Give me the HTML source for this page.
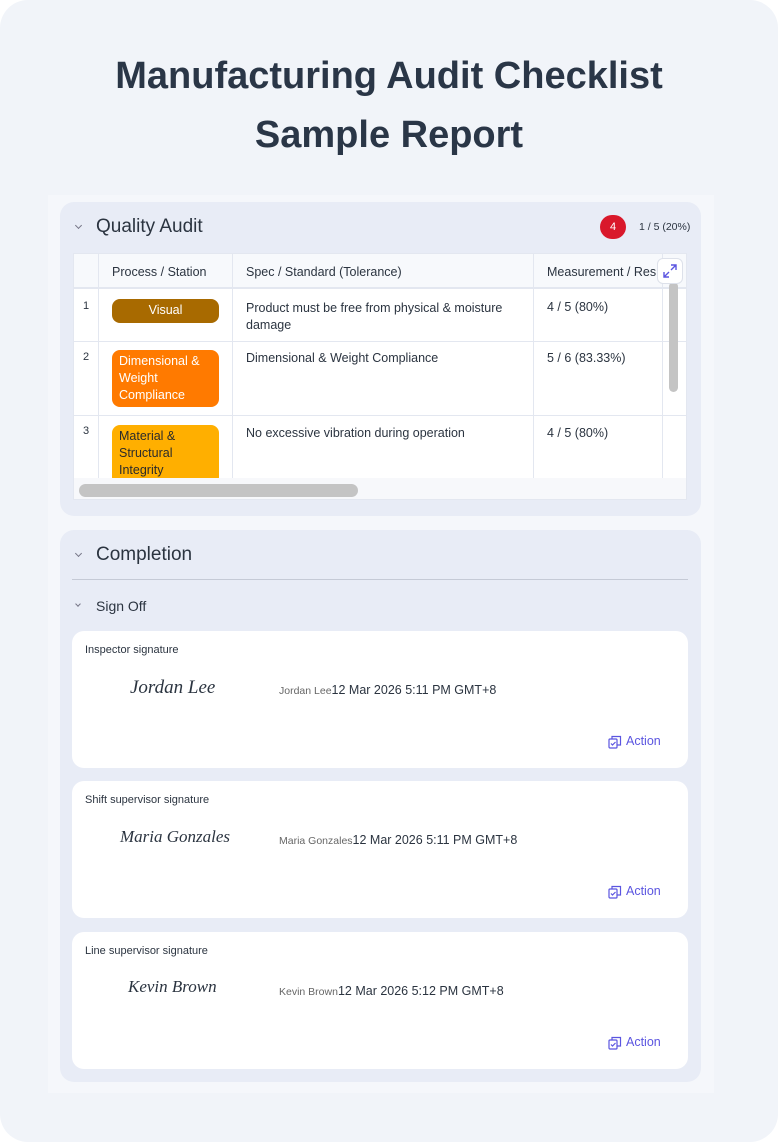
<!DOCTYPE html>
<html><head><style>
*{margin:0;padding:0;box-sizing:border-box}
body{width:778px;height:1142px;background:#fff;font-family:"Liberation Sans",sans-serif;color:#2b3440;position:relative;overflow:hidden}
.card{position:absolute;left:0;top:0;width:778px;height:1142px;background:#f1f4f9;border-radius:28px}
h1{position:absolute;left:0;width:778px;text-align:center;top:47px;font-size:38px;line-height:59px;font-weight:bold;color:#2a3647}
.inner{position:absolute;left:48px;top:195px;width:666px;height:898px;background:#f5f7fb}
.sec{position:absolute;left:60px;width:641px;background:#e8ecf6;border-radius:14px}
.chev{position:absolute;width:5px;height:5px;border-right:1.2px solid #778;border-bottom:1.2px solid #778;transform:rotate(45deg)}
.t{position:absolute;white-space:nowrap}
.tbl{position:absolute;left:73px;top:253px;width:614px;height:247px;background:#fff;border:1px solid #e3e7f0;overflow:hidden}
.hl{position:absolute;background:#e3e7f0}
.pill{position:absolute;left:38px;width:107px;border-radius:8px;font-size:12.5px;line-height:17px;padding:3px 7px}
.sig{position:absolute;left:72px;width:616px;height:137px;background:#fff;border-radius:12px}
.act{position:absolute;left:538px;top:103px;font-size:12.5px;color:#5b55e0}
.act svg{position:absolute;left:-2px;top:1px}
</style></head><body>
<div class="card"></div>
<h1>Manufacturing Audit Checklist<br>Sample Report</h1>
<div class="inner"></div>

<div class="sec" style="top:202px;height:314px"></div>
<div class="chev" style="left:76px;top:223px"></div>
<div class="t" style="left:96px;top:216px;font-size:19px">Quality Audit</div>
<div style="position:absolute;left:600px;top:215px;width:26px;height:24px;border-radius:12px;background:#d9182b;color:#fff;font-size:11px;text-align:center;line-height:24px">4</div>
<div class="t" style="left:639px;top:221px;font-size:10.5px">1 / 5 (20%)</div>

<div class="tbl">
 <div style="position:absolute;left:0;top:0;width:614px;height:33px;background:#f7f9fc"></div>
 <div class="hl" style="left:0;top:33px;width:614px;height:2px"></div>
 <div class="hl" style="left:0;top:87px;width:614px;height:1px"></div>
 <div class="hl" style="left:0;top:161px;width:614px;height:1px"></div>
 <div class="hl" style="left:24px;top:0;width:1px;height:247px"></div>
 <div class="hl" style="left:158px;top:0;width:1px;height:247px"></div>
 <div class="hl" style="left:459px;top:0;width:1px;height:247px"></div>
 <div class="hl" style="left:588px;top:0;width:1px;height:224px"></div>
 <div class="t" style="left:38px;top:11px;font-size:12.5px">Process / Station</div>
 <div class="t" style="left:172px;top:11px;font-size:12.5px">Spec / Standard (Tolerance)</div>
 <div class="t" style="left:473px;top:11px;font-size:12.5px">Measurement / Res</div>
 <div class="t" style="left:9px;top:46px;font-size:11px">1</div>
 <div class="t" style="left:9px;top:97px;font-size:11px">2</div>
 <div class="t" style="left:9px;top:171px;font-size:11px">3</div>
 <div class="pill" style="top:45px;background:#a86a00;color:#fff;text-align:center;height:24px;line-height:17px">Visual</div>
 <div class="pill" style="top:96px;background:#ff7a00;color:#fff;height:57px">Dimensional &amp;<br>Weight<br>Compliance</div>
 <div class="pill" style="top:171px;background:#ffaf00;color:#2b2b2b;height:60px">Material &amp;<br>Structural<br>Integrity</div>
 <div class="t" style="left:172px;top:46px;font-size:12.5px;line-height:17px">Product must be free from physical &amp; moisture<br>damage</div>
 <div class="t" style="left:172px;top:97px;font-size:12.5px">Dimensional &amp; Weight Compliance</div>
 <div class="t" style="left:172px;top:172px;font-size:12.5px">No excessive vibration during operation</div>
 <div class="t" style="left:473px;top:46px;font-size:12.5px">4 / 5 (80%)</div>
 <div class="t" style="left:473px;top:97px;font-size:12.5px">5 / 6 (83.33%)</div>
 <div class="t" style="left:473px;top:172px;font-size:12.5px">4 / 5 (80%)</div>
 <div style="position:absolute;left:0;top:224px;width:614px;height:23px;background:#f7f8fb"></div>
 <div style="position:absolute;left:5px;top:230px;width:279px;height:13px;border-radius:7px;background:#c4c4c4"></div>
 <div style="position:absolute;left:595px;top:28px;width:9px;height:110px;border-radius:5px;background:#c4c4c4"></div>
 <div style="position:absolute;left:583px;top:4px;width:26px;height:26px;border-radius:6px;background:#fff;border:1px solid #dde1ea">
  <svg width="24" height="24" viewBox="0 0 24 24" fill="none" stroke="#5b55e0" stroke-width="1.4"><path d="M13 6h5v5M18 6l-5 5M11 13l-5 5M6 13v5h5"/></svg>
 </div>
</div>

<div class="sec" style="top:530px;height:552px"></div>
<div class="chev" style="left:76px;top:551px"></div>
<div class="t" style="left:96px;top:544px;font-size:19px">Completion</div>
<div style="position:absolute;left:72px;top:579px;width:616px;height:1px;background:#c5cad6"></div>
<div class="chev" style="left:76px;top:602px;width:4px;height:4px"></div>
<div class="t" style="left:96px;top:598px;font-size:14px">Sign Off</div>

<div class="sig" style="top:631px">
 <div class="t" style="left:13px;top:13px;font-size:11px">Inspector signature</div>
 <div class="t" style="left:58px;top:46px;font-size:19px;font-family:'Liberation Serif',serif;font-style:italic">Jordan Lee</div>
 <div class="t" style="left:207px;top:52px;font-size:10.5px;color:#666">Jordan Lee<span style="font-size:12.5px;color:#2b3440">12 Mar 2026 5:11 PM GMT+8</span></div>
 <div class="act"><svg width="14" height="14" viewBox="0 0 14 14" fill="none" stroke="#5b55e0" stroke-width="1.2"><rect x="1" y="4" width="8" height="9" rx="1"/><path d="M4 4V1.5h8.5V10H9"/><path d="M3 8.5l1.5 1.5 3-3"/></svg><span style="margin-left:16px">Action</span></div>
</div>
<div class="sig" style="top:781px">
 <div class="t" style="left:13px;top:13px;font-size:11px">Shift supervisor signature</div>
 <div class="t" style="left:48px;top:46px;font-size:17px;font-family:'Liberation Serif',serif;font-style:italic">Maria Gonzales</div>
 <div class="t" style="left:207px;top:52px;font-size:10.5px;color:#666">Maria Gonzales<span style="font-size:12.5px;color:#2b3440">12 Mar 2026 5:11 PM GMT+8</span></div>
 <div class="act"><svg width="14" height="14" viewBox="0 0 14 14" fill="none" stroke="#5b55e0" stroke-width="1.2"><rect x="1" y="4" width="8" height="9" rx="1"/><path d="M4 4V1.5h8.5V10H9"/><path d="M3 8.5l1.5 1.5 3-3"/></svg><span style="margin-left:16px">Action</span></div>
</div>
<div class="sig" style="top:932px">
 <div class="t" style="left:13px;top:13px;font-size:11px">Line supervisor signature</div>
 <div class="t" style="left:56px;top:45px;font-size:17px;font-family:'Liberation Serif',serif;font-style:italic">Kevin Brown</div>
 <div class="t" style="left:207px;top:52px;font-size:10.5px;color:#666">Kevin Brown<span style="font-size:12.5px;color:#2b3440">12 Mar 2026 5:12 PM GMT+8</span></div>
 <div class="act"><svg width="14" height="14" viewBox="0 0 14 14" fill="none" stroke="#5b55e0" stroke-width="1.2"><rect x="1" y="4" width="8" height="9" rx="1"/><path d="M4 4V1.5h8.5V10H9"/><path d="M3 8.5l1.5 1.5 3-3"/></svg><span style="margin-left:16px">Action</span></div>
</div>
</body></html>
